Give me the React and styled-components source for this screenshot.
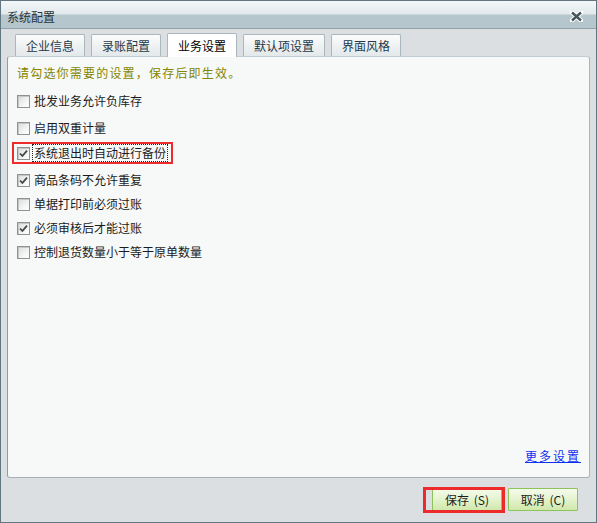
import React from "react";
import styled, { createGlobalStyle } from "styled-components";

const GlobalStyle = createGlobalStyle`
  html, body {
    margin: 0;
    padding: 0;
    background: #dcdfe2;
  }
  body {
    font-family: "Noto Sans CJK SC", "Noto Sans", sans-serif;
    font-size: 12px;
  }
`;

const Window = styled.div`
  width: 597px;
  height: 523px;
  box-sizing: border-box;
  border: 1px solid #62767f;
  display: flex;
  flex-direction: column;
  background: #dcdfe2;
`;

const TitleBar = styled.div`
  height: 28px;
  box-sizing: border-box;
  display: flex;
  align-items: center;
  justify-content: space-between;
  padding: 4px 13px 0 6px;
  border-bottom: 1px solid #8ea1a9;
  background: linear-gradient(
    to bottom,
    #f4f7f8 0,
    #e2e9ec 13px,
    #b5c6cc 14px,
    #b5c6cc 100%
  );
  color: #26343b;
  line-height: 16px;
`;

const Body = styled.div`
  flex: 1;
  display: flex;
  flex-direction: column;
  padding: 4px 6px 0 6px;
`;

const TabRow = styled.div`
  position: relative;
  z-index: 1;
  display: flex;
  align-items: flex-start;
  gap: 6px;
  height: 24px;
  padding-left: 8px;
  margin-bottom: -1px;
`;

const Tab = styled.div`
  box-sizing: border-box;
  height: ${(p) => (p.$active ? "24px" : "22px")};
  margin-top: ${(p) => (p.$active ? "0" : "1px")};
  padding: 0 10px;
  display: flex;
  align-items: center;
  border: 1px solid #aab7bd;
  border-bottom: none;
  border-radius: 2px 2px 0 0;
  background: ${(p) =>
    p.$active ? "#ffffff" : "linear-gradient(to bottom, #fbfcfc, #e3e8ea)"};
  color: ${(p) => (p.$active ? "#000" : "#24394a")};
  line-height: 16px;
  white-space: nowrap;
`;

const Panel = styled.div`
  height: 422px;
  box-sizing: border-box;
  display: flex;
  flex-direction: column;
  padding: 8px 9px 13px 9px;
  border: 1px solid;
  border-color: #c3ccd0 #a8b5bb #a3b0b6 #8c9ea6;
  border-radius: 3px;
  background: #f7f9f8;
`;

const Hint = styled.div`
  color: #858500;
  line-height: 16px;
  letter-spacing: 1.2px;
  margin-bottom: 10px;
`;

const OptionList = styled.div`
  display: flex;
  flex-direction: column;
`;

const Row = styled.div`
  height: 20px;
  display: flex;
  align-items: center;
  margin-top: ${(p) => p.$gap || 0}px;
`;

const Label = styled.label`
  position: relative;
  display: inline-flex;
  align-items: center;
  gap: 2px;
  color: #1b1b1b;
  line-height: 16px;
  cursor: default;
`;

const Box = styled.span`
  width: 13px;
  height: 13px;
  box-sizing: border-box;
  border: 1px solid #8f9193;
  background: linear-gradient(135deg, #d9dadb 0%, #f4f4f4 60%, #ffffff 100%);
  box-shadow: inset 1px 1px 0 #c4c6c8;
  display: flex;
  align-items: center;
  justify-content: center;
  flex: none;
`;

const Text = styled.span`
  padding: 0 1px;
  border: 1px ${(p) => (p.$focus ? "dotted #222" : "solid transparent")};
`;

const Highlight = styled.span`
  position: absolute;
  inset: ${(p) => p.$inset};
  border: ${(p) => p.$w || 3}px solid #ee2b2b;
  pointer-events: none;
`;

const Spacer = styled.div`
  flex: 1;
`;

const LinkRow = styled.div`
  display: flex;
  justify-content: flex-end;
`;

const MoreLink = styled.a`
  color: #1030f0;
  text-decoration: underline;
  letter-spacing: 2px;
  line-height: 16px;
  margin-right: -1px;
  cursor: pointer;
`;

const Footer = styled.div`
  flex: 1;
  display: flex;
  justify-content: flex-end;
  align-items: center;
  gap: 6px;
  padding: 0 12px 1px 0;
`;

const ButtonWrap = styled.div`
  position: relative;
`;

const Button = styled.button`
  width: 70px;
  height: 23px;
  box-sizing: border-box;
  border: 1px solid #8cc35a;
  border-radius: 1px;
  background: linear-gradient(to bottom, #f5fbec 0%, #e6f4d1 45%, #cfe8ab 100%);
  font-family: inherit;
  font-size: 12px;
  color: #1d1d1d;
  padding: 0;
  line-height: 16px;
  word-spacing: 2px;
  cursor: pointer;
`;

const Check = () => (
  <svg width="9" height="9" viewBox="0 0 9 9">
    <path
      d="M1 4.5 L3.4 7 L8 1.6"
      fill="none"
      stroke="#454545"
      strokeWidth="1.8"
    />
  </svg>
);

const CloseIcon = () => (
  <svg width="13" height="11" viewBox="0 0 13 11">
    <path
      d="M2 1.5 L11 9.5 M11 1.5 L2 9.5"
      stroke="#ffffff"
      strokeWidth="4.5"
      strokeLinecap="square"
    />
    <path d="M2 1.5 L11 9.5 M11 1.5 L2 9.5" stroke="#46545b" strokeWidth="2.4" />
  </svg>
);

const tabs = ["企业信息", "录账配置", "业务设置", "默认项设置", "界面风格"];

const options = [
  { text: "批发业务允许负库存", checked: false, gap: 0 },
  { text: "启用双重计量", checked: false, gap: 7 },
  { text: "系统退出时自动进行备份", checked: true, gap: 5, marked: true },
  { text: "商品条码不允许重复", checked: true, gap: 7 },
  { text: "单据打印前必须过账", checked: false, gap: 4 },
  { text: "必须审核后才能过账", checked: true, gap: 4 },
  { text: "控制退货数量小于等于原单数量", checked: false, gap: 4 },
];

export default function App() {
  return (
    <>
      <GlobalStyle />
      <Window>
        <TitleBar>
          <span>系统配置</span>
          <CloseIcon />
        </TitleBar>
        <Body>
          <TabRow>
            {tabs.map((t) => (
              <Tab key={t} $active={t === "业务设置"}>
                {t}
              </Tab>
            ))}
          </TabRow>
          <Panel>
            <Hint>请勾选你需要的设置，保存后即生效。</Hint>
            <OptionList>
              {options.map((o) => (
                <Row key={o.text} $gap={o.gap}>
                  <Label>
                    <Box>{o.checked && <Check />}</Box>
                    <Text $focus={o.marked}>{o.text}</Text>
                    {o.marked && (
                      <Highlight $w={2.5} $inset="-2px -5px -2px -5px" />
                    )}
                  </Label>
                </Row>
              ))}
            </OptionList>
            <Spacer />
            <LinkRow>
              <MoreLink>更多设置</MoreLink>
            </LinkRow>
          </Panel>
          <Footer>
            <ButtonWrap>
              <Button>保存 (S)</Button>
              <Highlight $inset="-1px -3px -2px -9px" />
            </ButtonWrap>
            <ButtonWrap>
              <Button>取消 (C)</Button>
            </ButtonWrap>
          </Footer>
        </Body>
      </Window>
    </>
  );
}
